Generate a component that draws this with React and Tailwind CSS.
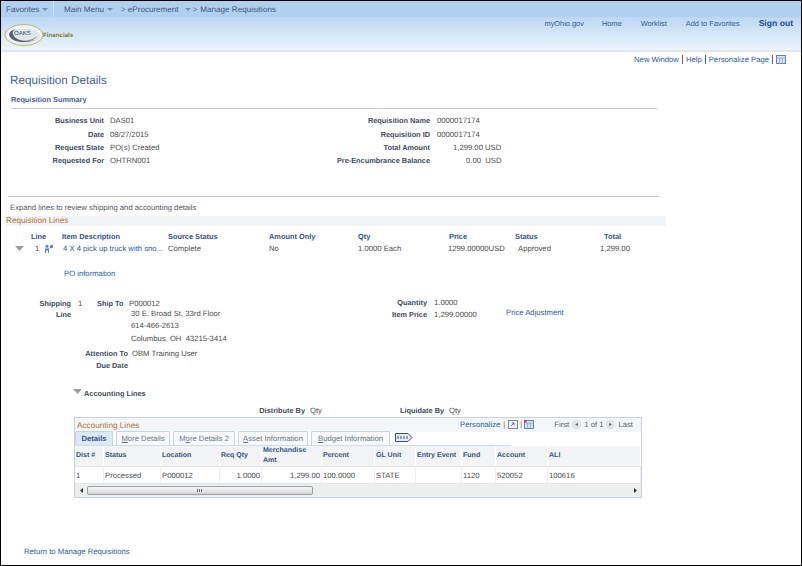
const lab = "text-[7.35px] font-bold text-[#3d4a5c]";
const hd = "text-[7.4px] font-bold text-[#33558b]";
const link = "text-[#1f5a9e]";

function Tri({ className = "" }) {
  return (
    <svg width="9" height="5" viewBox="0 0 9 5" className={className}>
      <path d="M0 0H9L4.5 5Z" fill="#9a9fa5" />
    </svg>
  );
}

function Caret() {
  return (
    <svg width="6" height="3" viewBox="0 0 6 3" className="ml-[3px] inline-block align-middle">
      <path d="M0 0H6L3 3Z" fill="#6f8fb3" />
    </svg>
  );
}

function Logo() {
  return (
    <svg width="40" height="24" viewBox="0 0 40 24">
      <ellipse cx="20" cy="12" rx="19" ry="10.5" fill="#eef3f7" stroke="#b9b95a" strokeWidth="1" />
      <ellipse cx="21" cy="13" rx="15" ry="7.5" fill="#dfe5ea" />
      <path d="M5 12C7 19 20 21 31 17C22 19 11 18 9 11C8 9 10 7 12 6C8 7 5 9 5 12Z" fill="#5b6168" />
      <path d="M20 18C26 19 31 17 33 13C30 16 26 17 20 18Z" fill="#8b9096" />
      <text x="10" y="11.5" fontSize="6" fill="#2c3e66" fontFamily="Liberation Sans, sans-serif">OAKS</text>
    </svg>
  );
}

function Field({ label, w, gap = "ml-[6px]", children }) {
  return (
    <div className="flex h-[13.4px] items-center">
      <div className={`${lab} text-right`} style={{ width: w }}>{label}</div>
      <div className={gap}>{children}</div>
    </div>
  );
}

function GridIcon({ red }) {
  return (
    <svg width="10" height="9" viewBox="0 0 10 9">
      <rect x="0.5" y="0.5" width="9" height="8" fill="#d5e2f2" stroke="#5d88bd" />
      <path d="M0 3H10M3.5 3V9M6.5 3V9" stroke="#7ea2cc" strokeWidth="0.7" />
      {red && <rect x="0" y="0" width="2.5" height="2.5" fill="#d33" />}
    </svg>
  );
}

function Arrow({ dir }) {
  return (
    <svg width="9" height="9" viewBox="0 0 9 9" className="mx-[3px]">
      <circle cx="4.5" cy="4.5" r="4.2" fill="#e3e6ea" stroke="#ccd0d5" strokeWidth="0.5" />
      <path d={dir === "l" ? "M5.8 2.8V6.2L3.2 4.5Z" : "M3.2 2.8V6.2L5.8 4.5Z"} fill="#666" />
    </svg>
  );
}

function ScrollTri({ dir }) {
  return (
    <svg width="3" height="5" viewBox="0 0 3 5">
      <path d={dir === "l" ? "M3 0V5L0 2.5Z" : "M0 0V5L3 2.5Z"} fill="#333" />
    </svg>
  );
}

const cols = [
  "Dist #",
  "Status",
  "Location",
  "Req Qty",
  "Merchandise Amt",
  "Percent",
  "GL Unit",
  "Entry Event",
  "Fund",
  "Account",
  "ALI",
];
const cells = ["1", "Processed", "P000012", "1.0000", "1,299.00", "100.0000", "STATE", "", "1120", "520052", "100616"];
const tmpl = "grid grid-cols-[29px_57px_59px_42px_60px_53px_41px_46px_34px_52px_93px]";

function Tab({ children, w, active }) {
  return (
    <div
      className={`flex h-[14px] items-center justify-center whitespace-nowrap rounded-t-[2px] border border-b-0 border-[#c5d3e3] ${active ? "bg-[#dbe8f6] font-bold text-[#33558b]" : "bg-[#f8f9fa] text-[#6b7684]"}`}
      style={{ width: w }}
    >
      {children}
    </div>
  );
}

const lineTmpl = "grid grid-cols-[31px_106px_101px_89px_91px_66px_89px_60px]";

export default function App() {
  return (
    <div className="box-border flex h-[566px] w-[802px] flex-col overflow-hidden border border-black bg-white font-[Liberation_Sans,sans-serif] text-[7.7px] leading-[11px] text-[#4c4c4c] [text-rendering:geometricPrecision]">
      <div className="flex h-[16px] shrink-0 items-center bg-[#b1cfee] text-[8.1px] text-[#3f5878]">
        <div className="flex h-full w-[53px] items-center border-r border-[#cfe0f3] pl-[5px]">Favorites<Caret /></div>
        <div className="ml-[10px] flex items-center">
          <span>Main Menu<Caret /></span>
          <span className="ml-[8px] mr-[2px] text-[#5f7a9c]">&gt;</span>
          <span>eProcurement<span className="ml-[3px]"><Caret /></span></span>
          <span className="ml-[2px] mr-[3px] text-[#5f7a9c]">&gt;</span>
          <span>Manage Requisitions</span>
        </div>
      </div>

      <div className="flex h-[35px] shrink-0 items-start justify-between border-b-2 border-[#e2e6ea] bg-gradient-to-b from-[#bcd7f3] to-[#edf4fc]">
        <div className="ml-[3px] mt-[6px] flex items-center">
          <Logo />
          <span className="-ml-[1px] text-[6.2px] font-bold text-[#7c7c2c]">Financials</span>
        </div>
        <div className="mr-[8px] flex h-[12px] items-center text-[7.4px] text-[#2a5c99]">
          <span className="pr-[8px]">myOhio.gov</span>
          <span className="border-l border-[#cddceb] px-[9px]">Home</span>
          <span className="border-l border-[#cddceb] px-[9px]">Worklist</span>
          <span className="border-l border-[#cddceb] px-[9px]">Add to Favorites</span>
          <span className="border-l border-[#cddceb] pl-[9px] text-[8.6px] font-bold text-[#1b4f8a]">Sign out</span>
        </div>
      </div>

      <div className={`mr-[15px] mt-[1px] flex h-[13px] shrink-0 items-center justify-end text-[7.7px] ${link}`}>
        <span>New Window</span>
        <span className="mx-[3px] h-[9px] w-px bg-[#a0563a]" />
        <span>Help</span>
        <span className="mx-[3px] h-[9px] w-px bg-[#2a5c99]" />
        <span>Personalize Page</span>
        <span className="mx-[3px] h-[9px] w-px bg-[#a0563a]" />
        <GridIcon />
      </div>

      <div className="ml-[9px] mt-[7px] text-[11.7px] leading-[15px] text-[#44628f]">Requisition Details</div>

      <div className="ml-[10px] mt-[6px] text-[7.35px] font-bold text-[#44628f]">Requisition Summary</div>
      <div className="ml-[10px] mt-[3px] h-px w-[646px] bg-[#c8c8c8]" />

      <div className="mt-[5px] flex shrink-0">
        <div className="w-[308px] shrink-0">
          <Field label="Business Unit" w="103px">DAS01</Field>
          <Field label="Date" w="103px">08/27/2015</Field>
          <Field label="Request State" w="103px">PO(s) Created</Field>
          <Field label="Requested For" w="103px">OHTRN001</Field>
        </div>
        <div>
          <Field label="Requisition Name" w="121px" gap="ml-[7px]">0000017174</Field>
          <Field label="Requisition ID" w="121px" gap="ml-[7px]">0000017174</Field>
          <Field label="Total Amount" w="121px" gap="ml-[23px]">1,299.00 USD</Field>
          <Field label="Pre-Encumbrance Balance" w="121px" gap="ml-[36px]">0.00&nbsp; USD</Field>
        </div>
      </div>

      <div className="ml-[7px] mt-[28px] h-px w-[651px] bg-[#c8c8c8]" />
      <div className="ml-[9px] mt-[5px] text-[#50555c]">Expand lines to review shipping and accounting details</div>

      <div className="ml-[5px] mt-[3px] h-[10px] w-[660px] bg-[#f1f4f7] text-[8.2px] leading-[10px] text-[#b5702f]">Requisition Lines</div>

      <div className={`ml-[30px] mt-[5px] ${lineTmpl} ${hd}`}>
        <span>Line</span>
        <span>Item Description</span>
        <span>Source Status</span>
        <span>Amount Only</span>
        <span>Qty</span>
        <span>Price</span>
        <span>Status</span>
        <span>Total</span>
      </div>

      <div className="mt-[1px] flex h-[12px] items-center">
        <Tri className="ml-[14px] mr-[11px] shrink-0" />
        <span className="w-[9px]">1</span>
        <svg width="11" height="10" viewBox="0 0 11 10" className="shrink-0">
          <circle cx="3" cy="2.2" r="1.5" fill="#4d82c4" />
          <path d="M1 4.5H5V9H4V6.5H2V9H1Z" fill="#4d82c4" />
          <circle cx="7.5" cy="2.5" r="1.6" fill="#6f7884" />
          <path d="M5 4.5L9.5 1" stroke="#6f7884" strokeWidth="0.8" />
        </svg>
        <span className={`ml-[8px] w-[105px] whitespace-nowrap ${link}`}>4 X 4 pick up truck with sno...</span>
        <span className="w-[101px]">Complete</span>
        <span className="w-[89px]">No</span>
        <span className="w-[90px]">1.0000 Each</span>
        <span className="w-[70px]">1299.00000USD</span>
        <span className="w-[82px]">Approved</span>
        <span>1,299.00</span>
      </div>

      <div className={`ml-[63px] mt-[13px] ${link}`}>PO information</div>

      <div className="mt-[19px] flex">
        <div className="w-[70px] text-right">
          <span className={lab}>Shipping<br />Line</span>
        </div>
        <span className="ml-[7px] w-[19px]">1</span>
        <span className={`w-[26px] ${lab} whitespace-nowrap`}>Ship To</span>
        <div className="ml-[6px] w-[268px]">
          <div>P000012</div>
          <div className="-mt-[1px] ml-[2px]">30 E. Broad St, 33rd Floor</div>
          <div className="ml-[2px] mt-[1px]">614-466-2613</div>
          <div className="ml-[2px] mt-[2px]">Columbus, OH&nbsp; 43215-3414</div>
        </div>
        <div className="-mt-[1px]">
          <div className="flex h-[11px]"><span className={`w-[30px] text-right whitespace-nowrap ${lab}`}>Quantity</span><span className="ml-[7px]">1.0000</span></div>
          <div className="mt-[1px] flex h-[11px]">
            <span className={`-ml-[6px] w-[36px] text-right whitespace-nowrap ${lab}`}>Item Price</span>
            <span className="ml-[7px] w-[72px]">1,299.00000</span>
            <span className={`-mt-[2px] ${link}`}>Price Adjustment</span>
          </div>
        </div>
      </div>

      <div className="mt-[4px] flex">
        <span className={`w-[127px] text-right ${lab}`}>Attention To</span>
        <span className="ml-[4px]">OBM Training User</span>
      </div>
      <div className={`mt-[1px] w-[127px] text-right ${lab}`}>Due Date</div>

      <div className="ml-[72px] mt-[17px] flex items-center">
        <Tri className="-mt-[3px]" />
        <span className={`ml-[2px] ${lab}`}>Accounting Lines</span>
      </div>

      <div className="mt-[6px] flex h-[11px]">
        <span className={`w-[304px] text-right ${lab}`}>Distribute By</span>
        <span className="ml-[5px] w-[90px]">Qty</span>
        <span className={`w-[44px] text-right whitespace-nowrap ${lab}`}>Liquidate By</span>
        <span className="ml-[5px]">Qty</span>
      </div>

      <div className="ml-[73px] mt-[1px] box-border w-[568px] border border-[#c9d2dc]">
        <div className="flex h-[14px] items-center justify-between bg-[#f3f6f9] pl-[2px] pr-[8px]">
          <span className="pt-[1px] text-[8.2px] text-[#b5702f]">Accounting Lines</span>
          <div className="flex items-center">
            <span className="text-[#2a5c99]">Personalize</span>
            <span className="mx-[3px] text-[#a0563a]">|</span>
            <svg width="10" height="9" viewBox="0 0 10 9"><rect x="0.5" y="0.5" width="9" height="8" fill="#eef2f7" stroke="#7a8aa0" /><path d="M3 6L6 3M4 3H6V5" stroke="#555" fill="none" strokeWidth="0.8" /></svg>
            <span className="mx-[2px] text-[#a0563a]">|</span>
            <GridIcon red />
            <span className="ml-[20px] text-[#5a5f66]">First</span>
            <Arrow dir="l" />
            <span className="text-[#5a5f66]">1 of 1</span>
            <Arrow dir="r" />
            <span className="text-[#5a5f66]">Last</span>
          </div>
        </div>
        <div className="mr-[130px] flex h-[14px] items-end gap-[3px] border-b border-[#cfdcea]">
          <Tab w="38px" active>Details</Tab>
          <Tab w="54px"><span><u>M</u>ore Details</span></Tab>
          <Tab w="62px"><span>M<u>o</u>re Details 2</span></Tab>
          <Tab w="70px"><span><u>A</u>sset Information</span></Tab>
          <Tab w="79px"><span><u>B</u>udget Information</span></Tab>
          <svg width="18" height="9" viewBox="0 0 18 9" className="mb-[3px] ml-[2px]"><path d="M0.5 0.5H13L17 4.5L13 8.5H0.5Z" fill="#e8eefc" stroke="#37478f" /><path d="M3 3V6M6 3V6M9 3V6M12 3V6" stroke="#37478f" /></svg>
        </div>
        <div className={`${tmpl} h-[20px] bg-[#f2f3f4] text-[7.05px] font-bold text-[#33558b]`}>
          {cols.map((name) => (
            <div key={name} className="flex items-center border-r border-white pl-[1px] leading-[9.5px]">{name}</div>
          ))}
        </div>
        <div className={`${tmpl} h-[18px] border-y border-[#e3e5e8]`}>
          {cells.map((c, i) => (
            <div key={i} className={`flex items-center border-r border-[#eceef0] px-[1px] pt-[2px] ${i === 3 || i === 4 ? "justify-end" : ""}`}>{c}</div>
          ))}
        </div>
        <div className="flex h-[13px] items-center bg-[#eceded]">
          <div className="flex w-[12px] justify-center"><ScrollTri dir="l" /></div>
          <div className="flex h-[9px] w-[226px] items-center justify-center rounded-[2px] border border-[#9aa0a6] bg-gradient-to-b from-[#f5f5f5] to-[#d6d6d6]">
            <span className="h-[3px] w-[6px] bg-[repeating-linear-gradient(90deg,#777_0,#777_1px,transparent_1px,transparent_2px)]" />
          </div>
          <div className="ml-auto pr-[4px]"><ScrollTri dir="r" /></div>
        </div>
      </div>

      <div className={`ml-[23px] mt-[48px] ${link}`}>Return to Manage Requisitions</div>
    </div>
  );
}
